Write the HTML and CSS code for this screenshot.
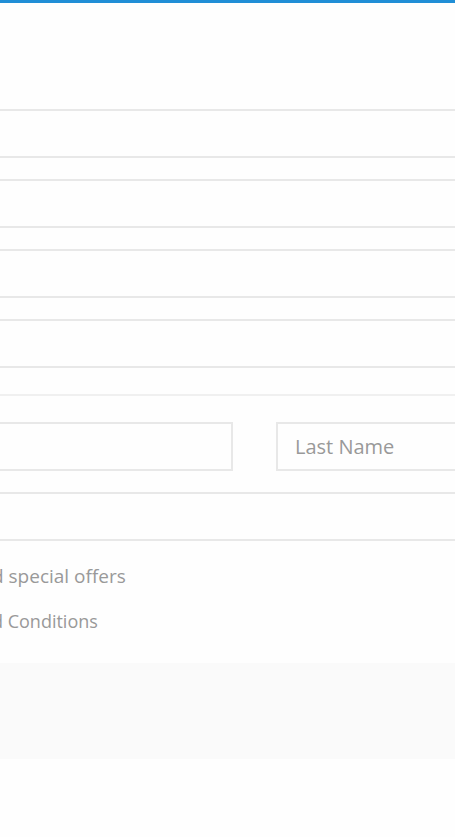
FILE: index.html
```html
<!DOCTYPE html>
<html lang="en">
<head>
<meta charset="utf-8">
<meta name="viewport" content="width=device-width, initial-scale=1">
<title>Registration</title>
<link rel="stylesheet" href="styles.css">
</head>
<body>
<main class="card">
  <form class="form">
    <div class="fields">
      <input class="field" type="text" aria-label="Username">
      <input class="field" type="email" aria-label="Email">
      <input class="field" type="password" aria-label="Password">
      <input class="field" type="password" aria-label="Confirm password">
    </div>
    <hr class="divider">
    <div class="fields">
      <div class="pair">
        <input class="field" type="text" aria-label="First name">
        <input class="field" type="text" aria-label="Last name" placeholder="Last Name">
      </div>
      <input class="field" type="text" aria-label="Country">
    </div>
    <div class="notes">
      <p class="note">d special offers</p>
      <p class="note note-small">d Conditions</p>
    </div>
  </form>
  <footer class="footer"></footer>
</main>
</body>
</html>
```
FILE: styles.css
```css
* {
  box-sizing: border-box;
}

body {
  margin: 0;
  background: #fefefe;
  color: #999;
  font-family: "Open Sans", sans-serif;
}

.card {
  border-top: 3px solid #208ed6;
  overflow: hidden;
}

/* The form is wider than the window and runs past both edges. */
.form {
  margin: 0 -74px 0 -20px;
  padding-top: 106px;
}

.fields {
  display: grid;
  gap: 21px;
}

.pair {
  display: grid;
  grid-template-columns: 1fr 1fr;
  gap: 43px;
}

.field {
  width: 100%;
  min-width: 0;
  height: 49px;
  padding: 0 17px;
  border: 2px solid #e8e8e8;
  border-radius: 0;
  background: transparent;
  color: #999;
  font: inherit;
  font-size: 20px;
}

.field::placeholder {
  color: #999;
  opacity: 1;
}

.divider {
  height: 2px;
  margin: 26px 0;
  border: 0;
  background: #f0f0f0;
}

.notes {
  display: grid;
  gap: 17px;
  margin: 21px 0 28px 12px;
}

.note {
  margin: 0;
  font-size: 19px;
  line-height: 28px;
}

.note-small {
  font-size: 18px;
}

.footer {
  height: 96px;
  background: #fafafa;
}
```
